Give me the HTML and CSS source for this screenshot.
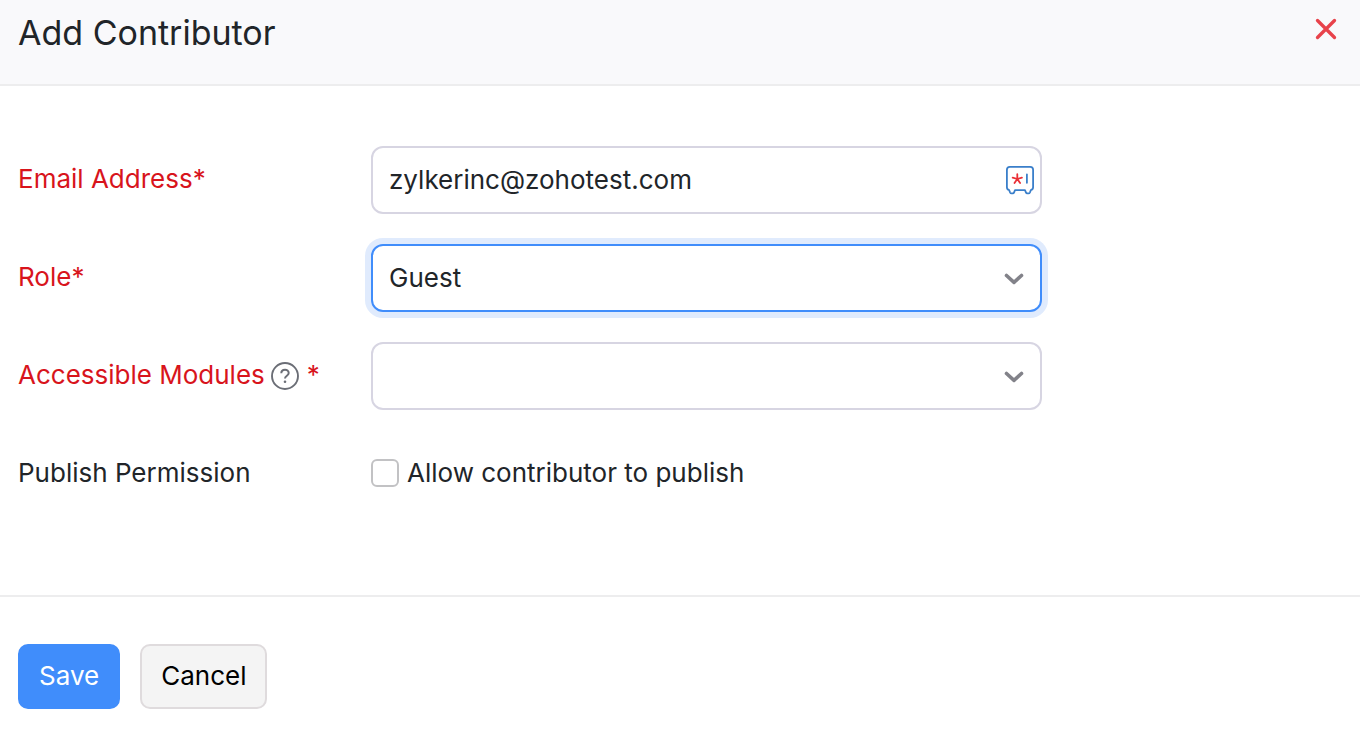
FILE: index.html
```html
<!DOCTYPE html>
<html lang="en">
<head>
    <meta charset="utf-8">
    <title>Add Contributor</title>
    <link rel="stylesheet" href="styles.css">
</head>
<body>
    <header class="dialog-header">
        <h1>Add Contributor</h1>
        <button type="button" class="close" aria-label="Close">
            <svg width="22" height="22" viewBox="0 0 22 22">
                <path d="M2.5 2.5L19.5 19.5M19.5 2.5L2.5 19.5" fill="none" stroke="#e8424a" stroke-width="3.3" stroke-linecap="round"/>
            </svg>
        </button>
    </header>

    <form>
        <div class="fields">
            <div class="row">
                <label class="title required" for="email">Email Address*</label>
                <div class="control">
                    <input type="text" id="email" value="zylkerinc@zohotest.com">
                    <svg class="vault" width="30" height="30" viewBox="0 0 30 30" fill="none" stroke-linecap="round" stroke-linejoin="round">
                        <path d="M4.8 1.9H25.2Q28.1 1.9 28.1 4.8V22.3Q28.1 24.6 25.8 25.2L25 27.3Q24.5 28.3 23.5 28.3H22.3Q21.3 28.3 20.9 27.3L20 25.2H10L9.1 27.3Q8.7 28.3 7.7 28.3H6.5Q5.5 28.3 5 27.3L4.2 25.2Q1.9 24.6 1.9 22.3V4.8Q1.9 1.9 4.8 1.9Z" stroke="#3a7fca" stroke-width="1.8"/>
                        <path d="M12.3 14V9.2M12.3 14L7.7 12.6M12.3 14L16.9 12.6M12.3 14L9.5 18M12.3 14L15.1 18" stroke="#ea3037" stroke-width="1.8"/>
                        <path d="M21.9 9.5V17.8" stroke="#3a7fca" stroke-width="1.8"/>
                    </svg>
                </div>
            </div>

            <div class="row">
                <label class="title required" for="role">Role*</label>
                <div class="control">
                    <select id="role" class="active">
                        <option>Guest</option>
                    </select>
                    <svg class="arrow" width="20" height="12" viewBox="0 0 20 12">
                        <path d="M2.5 2.5L10 9.3L17.5 2.5" fill="none" stroke="#828289" stroke-width="3.6" stroke-linecap="round" stroke-linejoin="round"/>
                    </svg>
                </div>
            </div>

            <div class="row">
                <label class="title required" for="modules">Accessible Modules<svg class="help" width="30" height="30" viewBox="0 0 30 30" fill="none" stroke="#6b6e76">
                        <circle cx="15" cy="15" r="13" stroke-width="1.9"/>
                        <path d="M11.3 12.2C11.3 7.5 18.7 7.5 18.7 12C18.7 14.8 15 14.7 15 17.6" stroke-width="2"/>
                        <circle cx="15" cy="20.7" r="1.3" fill="#6b6e76" stroke="none"/>
                    </svg>*</label>
                <div class="control">
                    <select id="modules">
                        <option></option>
                    </select>
                    <svg class="arrow" width="20" height="12" viewBox="0 0 20 12">
                        <path d="M2.5 2.5L10 9.3L17.5 2.5" fill="none" stroke="#828289" stroke-width="3.6" stroke-linecap="round" stroke-linejoin="round"/>
                    </svg>
                </div>
            </div>

            <div class="row" role="group" aria-labelledby="publish-title">
                <span class="title" id="publish-title">Publish Permission</span>
                <div class="check">
                    <input type="checkbox" id="publish">
                    <label for="publish">Allow contributor to publish</label>
                </div>
            </div>
        </div>

        <div class="actions">
            <button type="submit" class="save">Save</button>
            <button type="button" class="cancel">Cancel</button>
        </div>
    </form>
</body>
</html>
```

FILE: styles.css
```css
* {
    box-sizing: border-box;
}

body {
    font-family: Inter, Arial, sans-serif;
    font-size: 26px;
    line-height: 32px;
    color: #212529;
    background-color: #fff;
    margin: 0;
}

input, select, button {
    font: inherit;
    color: inherit;
}

.dialog-header {
    display: flex;
    justify-content: space-between;
    align-items: flex-start;
    padding: 12px 23px 30px 18px;
    background-color: #f9f9fb;
    border-bottom: 2px solid #ededee;
}

h1 {
    margin: 0;
    font-size: 34px;
    font-weight: 400;
    line-height: 42px;
}

.close {
    display: flex;
    margin-top: 6px;
    padding: 0;
    border: none;
    background: none;
    cursor: pointer;
}

.fields {
    display: grid;
    gap: 30px;
    padding: 60px 18px 87px;
    border-bottom: 2px solid #ededee;
}

.row {
    display: grid;
    grid-template-columns: 353px minmax(0, 671px);
    align-items: center;
    min-height: 68px;
}

.title,
.check {
    padding-bottom: 2px;
}

.required {
    color: #d8141c;
}

.control {
    position: relative;
}

.control input,
.control select {
    display: block;
    width: 100%;
    height: 68px;
    padding: 0 50px 0 16px;
    border: 2px solid #d7d5e2;
    border-radius: 12px;
    background-color: #fff;
    outline: none;
    appearance: none;
}

.control input {
    padding-bottom: 2px;
}

.control select.active,
.control select:focus {
    border-color: #408dfb;
    box-shadow: 0 0 0 6px #e0ebfd;
}

.vault {
    position: absolute;
    right: 7px;
    top: 19px;
}

.arrow {
    position: absolute;
    right: 18px;
    top: 29px;
    pointer-events: none;
}

.help {
    margin: 0 7px 0 5px;
    vertical-align: -7px;
}

.check {
    display: flex;
    align-items: center;
    gap: 8px;
}

.check input {
    width: 28px;
    height: 28px;
    margin: 0;
    border: 2px solid #c2c2c4;
    border-radius: 6px;
    background-color: #fff;
    appearance: none;
}

.check input:checked {
    background-color: #408dfb;
}

.actions {
    display: flex;
    gap: 20px;
    padding: 47px 18px;
}

.actions button {
    padding: 14px 19px 16px;
    border: 2px solid #408dfb;
    border-radius: 10px;
    line-height: 31px;
    cursor: pointer;
}

.actions .save {
    background-color: #408dfb;
    color: #fff;
}

.actions .cancel {
    background-color: #f4f4f4;
    border-color: #dfdbdd;
    color: #000;
}
```
